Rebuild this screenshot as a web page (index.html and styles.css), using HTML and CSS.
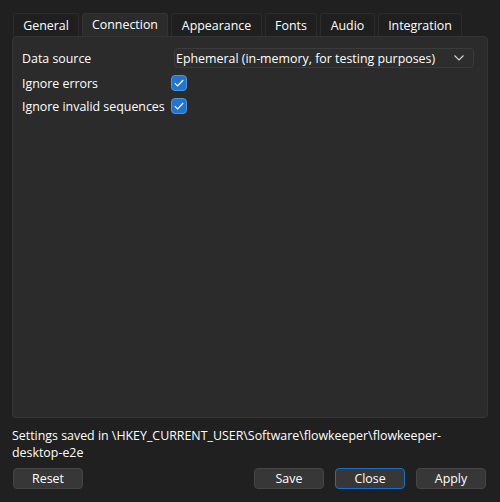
FILE: index.html
```html
<!DOCTYPE html>
<html>
<head>
<meta charset="utf-8">
<link rel="stylesheet" href="styles.css">
</head>
<body>
<div class="dialog">
  <div class="tabs">
    <div class="tab t-general">General</div>
    <div class="tab active t-conn">Connection</div>
    <div class="tab t-app">Appearance</div>
    <div class="tab t-fonts">Fonts</div>
    <div class="tab t-audio">Audio</div>
    <div class="tab t-integ">Integration</div>
  </div>
  <div class="panel">
    <div class="row row-first">
      <div class="label">Data source</div>
      <div class="select">
        <span class="select-text">Ephemeral (in-memory, for testing purposes)</span>
        <svg class="chev" width="10" height="6" viewBox="0 0 10 6"><path d="M0.5 0.5 L5 5 L9.5 0.5" fill="none" stroke="#d8d8d8" stroke-width="1.1"/></svg>
      </div>
    </div>
    <div class="row">
      <div class="label check-label">Ignore errors</div>
      <div class="check"><svg width="10" height="8" viewBox="0 0 10 8"><path d="M0.8 4.2 L3.6 7 L9.2 1" fill="none" stroke="#ffffff" stroke-width="1.1"/></svg></div>
    </div>
    <div class="row">
      <div class="label check-label">Ignore invalid sequences</div>
      <div class="check"><svg width="10" height="8" viewBox="0 0 10 8"><path d="M0.8 4.2 L3.6 7 L9.2 1" fill="none" stroke="#ffffff" stroke-width="1.1"/></svg></div>
    </div>
  </div>
  <div class="info">Settings saved in \HKEY_CURRENT_USER\Software\flowkeeper\flowkeeper-<br>desktop-e2e</div>
  <div class="buttons">
    <div class="btn">Reset</div>
    <div class="spacer"></div>
    <div class="btn">Save</div>
    <div class="btn focus">Close</div>
    <div class="btn">Apply</div>
  </div>
</div>
</body>
</html>
```
FILE: styles.css
```css
html, body {
  margin: 0;
  padding: 0;
  background: #202020;
  width: 500px;
  height: 502px;
  overflow: hidden;
}
body {
  font-family: "Open Sans", "Noto Sans", sans-serif;
  font-size: 12.4px;
  color: #ffffff;
}
.dialog {
  display: flex;
  flex-direction: column;
  padding: 13px 12px 0 12px;
}
.tabs {
  display: flex;
  gap: 3px;
  padding-left: 1px;
  height: 23px;
}
.tab {
  box-sizing: border-box;
  height: 23px;
  border: 1px solid #2c2c2c;
  border-bottom: none;
  border-radius: 3px 3px 0 0;
  background: #1f1f1f;
  display: flex;
  align-items: center;
  justify-content: center;
  padding-top: 1px;
}
.tab.active {
  background: #2b2b2b;
  border-color: #333333;
  height: 23px;
  padding-top: 0;
  padding-bottom: 2px;
}
.t-general { width: 66px; }
.t-conn { width: 86px; }
.t-app { width: 91px; }
.t-fonts { width: 52px; }
.t-audio { width: 55px; }
.t-integ { width: 84px; }
.panel {
  box-sizing: border-box;
  height: 382px;
  background: #2b2b2b;
  border: 1px solid #353535;
  border-radius: 4px;
  padding: 10px 0 0 9px;
  display: flex;
  flex-direction: column;
}
.row {
  display: flex;
  align-items: center;
  height: 23px;
}
.row-first {
  height: 22px;
  margin-bottom: 2px;
}
.label {
  width: 152px;
  flex: none;
}
.check-label {
  padding-top: 2px;
}
.select {
  box-sizing: border-box;
  width: 300px;
  height: 20px;
  border: 1px solid #3b3b3b;
  border-radius: 4px;
  background: #2d2d2d;
  display: flex;
  align-items: center;
  padding: 0 9px 0 1px;
  justify-content: space-between;
}
.check {
  box-sizing: border-box;
  width: 16px;
  height: 16px;
  margin-left: -3px;
  border-radius: 4px;
  background: #2374cc;
  border: 1px solid #5094dc;
  display: flex;
  align-items: center;
  justify-content: center;
}
.info {
  margin-top: 9px;
  line-height: 17px;
  padding-left: 0;
}
.buttons {
  display: flex;
  margin-top: 7px;
  padding-left: 1px;
  padding-right: 2px;
  gap: 11px;
}
.spacer { flex: 1; }
.btn {
  box-sizing: border-box;
  width: 70px;
  height: 21px;
  background: #373737;
  border: 1px solid #454545;
  border-radius: 4px;
  display: flex;
  align-items: center;
  justify-content: center;
}
.btn.focus {
  border-color: #1a6fc8;
}
```
